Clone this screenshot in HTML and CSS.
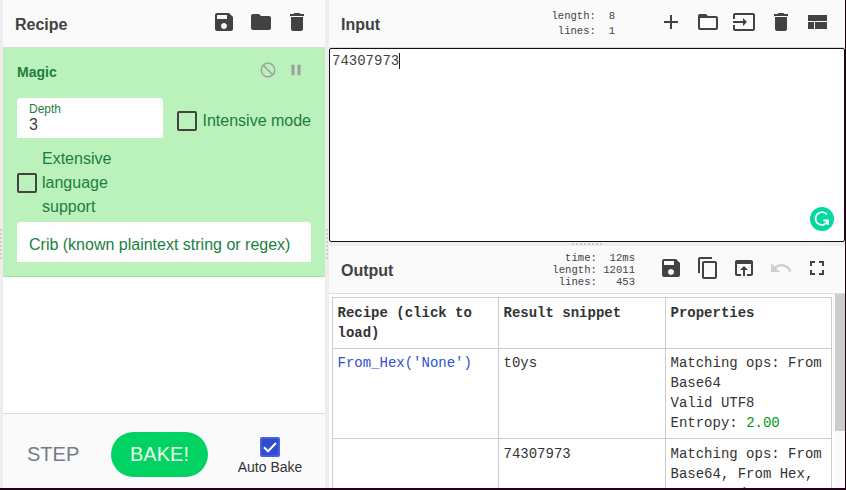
FILE: index.html
```
<!DOCTYPE html>
<html lang="en">
<head>
<meta charset="utf-8">
<title>CyberChef</title>
<link rel="stylesheet" href="styles.css">
</head>
<body>
<div class="workspace">
  <div class="gutter gutter-left"><i class="grip"></i></div>
  <section class="recipe">
    <header class="title-bar recipe-bar">
      <h2>Recipe</h2>
      <div class="icons">
        <svg viewBox="0 0 24 24"><path d="M17 3H5a2 2 0 0 0-2 2v14c0 1.100.9 2 2 2h14c1.100 0 2-.9 2-2V7l-4-4zm-5 16c-1.660 0-3-1.340-3-3s1.340-3 3-3 3 1.340 3 3-1.340 3-3 3zm3-10H5V5h10v4z"/></svg>
        <svg viewBox="0 0 24 24"><path d="M10 4H4c-1.100 0-1.990.9-1.990 2L2 18c0 1.100.9 2 2 2h16c1.100 0 2-.9 2-2V8c0-1.100-.9-2-2-2h-8l-2-2z"/></svg>
        <svg viewBox="0 0 24 24"><path d="M6 19c0 1.100.9 2 2 2h8c1.100 0 2-.9 2-2V7H6v12zM19 4h-3.500l-1-1h-5l-1 1H5v2h14V4z"/></svg>
      </div>
    </header>
    <div class="operation">
      <div class="op-head">
        <h3>Magic</h3>
        <div class="op-icons">
          <svg viewBox="0 0 24 24"><path d="M12 2a10 10 0 1 0 0 20 10 10 0 0 0 0-20zm0 18a8 8 0 0 1-6.310-12.900L16.900 18.310A7.900 7.900 0 0 1 12 20zm6.310-3.100L7.100 5.690A8 8 0 0 1 18.310 16.900z"/></svg>
          <svg viewBox="0 0 24 24"><path d="M6 19h4V5H6v14zm8-14v14h4V5h-4z"/></svg>
        </div>
      </div>
      <div class="args">
        <div class="field depth"><label>Depth</label><span>3</span></div>
        <div class="check intensive"><i class="box"></i><span>Intensive mode</span></div>
      </div>
      <div class="check extensive"><i class="box"></i><span>Extensive language support</span></div>
      <div class="field crib">Crib (known plaintext string or regex)</div>
    </div>
    <footer class="controls">
      <div class="step">STEP</div>
      <div class="bake">BAKE!</div>
      <div class="auto">
        <svg viewBox="0 0 20 20"><rect width="20" height="20" rx="2" fill="#3f68d8"/><rect x="1.500" y="1.500" width="17" height="17" fill="#3449cf" stroke="#4a67da" stroke-width=".6"/><path d="M4 10.300L8 14.300L16 6" fill="none" stroke="#fff" stroke-width="2"/></svg>
        <span>Auto Bake</span>
      </div>
    </footer>
  </section>
  <div class="gutter gutter-mid"><i class="grip"></i></div>
  <section class="io">
    <header class="title-bar">
      <h2>Input</h2>
      <pre class="stats in-stats">length:  8
 lines:  1</pre>
      <div class="icons">
        <svg viewBox="0 0 24 24"><path d="M19 13h-6v6h-2v-6H5v-2h6V5h2v6h6v2z"/></svg>
        <svg viewBox="0 0 24 24"><path d="M20 6h-8l-2-2H4c-1.100 0-1.990.9-1.990 2L2 18c0 1.100.9 2 2 2h16c1.100 0 2-.9 2-2V8c0-1.100-.9-2-2-2zm0 12H4V8h16v10z"/></svg>
        <svg viewBox="0 0 24 24"><path d="M21 3H3c-1.100 0-2 .9-2 2v4h2V5h18v14H3v-4H1v4c0 1.100.9 2 2 2h18c1.100 0 2-.9 2-2V5c0-1.100-.9-2-2-2zM11 16l4-4-4-4v3H1v2h10v3z"/></svg>
        <svg viewBox="0 0 24 24"><path d="M6 19c0 1.100.9 2 2 2h8c1.100 0 2-.9 2-2V7H6v12zM19 4h-3.500l-1-1h-5l-1 1H5v2h14V4z"/></svg>
        <svg viewBox="0 0 24 24"><path d="M3 19h6v-7H3v7zm7 0h12v-7H10v7zM3 5v6h19V5H3z"/></svg>
      </div>
    </header>
    <div class="input-text">
      <span class="typed">74307973</span>
      <svg class="badge" viewBox="0 0 24 24"><circle cx="12" cy="12" r="12" fill="#00d9a0"/><path d="M17 7.600A6.400 6.400 0 1 0 18 13.500H13.300M18 13v5" fill="none" stroke="#fff" stroke-width="1.800"/></svg>
    </div>
    <div class="gutter-h"><i class="grip-h"></i></div>
    <header class="title-bar output-bar">
      <h2>Output</h2>
      <pre class="stats out-stats">  time:  12ms
length: 12011
 lines:   453</pre>
      <div class="icons">
        <svg viewBox="0 0 24 24"><path d="M17 3H5a2 2 0 0 0-2 2v14c0 1.100.9 2 2 2h14c1.100 0 2-.9 2-2V7l-4-4zm-5 16c-1.660 0-3-1.340-3-3s1.340-3 3-3 3 1.340 3 3-1.340 3-3 3zm3-10H5V5h10v4z"/></svg>
        <svg viewBox="0 0 24 24"><path d="M16 1H4c-1.100 0-2 .9-2 2v14h2V3h12V1zm3 4H8c-1.100 0-2 .9-2 2v14c0 1.100.9 2 2 2h11c1.100 0 2-.9 2-2V7c0-1.100-.9-2-2-2zm0 16H8V7h11v14z"/></svg>
        <svg viewBox="0 0 24 24"><path d="M19 4H5c-1.110 0-2 .9-2 2v12c0 1.100.89 2 2 2h4v-2H5V8h14v10h-4v2h4c1.100 0 2-.9 2-2V6c0-1.100-.89-2-2-2zm-7 6l-4 4h3v6h2v-6h3l-4-4z"/></svg>
        <svg class="disabled" viewBox="0 0 24 24"><path d="M12.500 8c-2.650 0-5.050.99-6.900 2.600L2 7v9h9l-3.620-3.620c1.390-1.160 3.160-1.880 5.120-1.880 3.540 0 6.550 2.310 7.600 5.500l2.370-.78C21.080 11.030 17.150 8 12.500 8z"/></svg>
        <svg viewBox="0 0 24 24"><path d="M7 14H5v5h5v-2H7v-3zm-2-4h2V7h3V5H5v5zm12 7h-3v2h5v-5h-2v3zM14 5v2h3v3h2V5h-5z"/></svg>
      </div>
    </header>
    <div class="output">
      <table>
        <tr><th class="c1">Recipe (click to load)</th><th class="c2">Result snippet</th><th>Properties</th></tr>
        <tr><td><a>From_Hex('None')</a></td><td>t0ys</td><td>Matching ops: From Base64<br>Valid UTF8<br>Entropy: <b>2.00</b></td></tr>
        <tr class="last"><td></td><td>74307973</td><td>Matching ops: From Base64, From Hex, From Hexdump</td></tr>
      </table>
      <div class="scroll"><i></i></div>
    </div>
  </section>
</div>
</body>
</html>
```
FILE: styles.css
```
* { box-sizing: border-box; }
body {
  margin: 0;
  width: 846px;
  height: 490px;
  overflow: hidden;
  background: #240018;
  color: #424242;
  font-family: "Liberation Sans", Arial, sans-serif;
}
.workspace {
  display: grid;
  grid-template-columns: 3px 322px 4px 516px;
  width: 845px;
  height: 488px;
  overflow: hidden;
}
.gutter { background: #eee; padding-top: 229px; }
.grip {
  display: block;
  width: 2px;
  height: 30px;
  background: repeating-linear-gradient(#ccc 0 2px, transparent 2px 4px);
}
.gutter-mid .grip { margin-left: 1px; }
.recipe, .io { display: flex; flex-direction: column; height: 488px; background: #fff; min-width: 0; }
.title-bar {
  flex: none;
  display: flex;
  align-items: flex-start;
  height: 48px;
  padding: 10px 16px 0 12px;
  background: #fafafa;
  border-bottom: 1px solid #ddd;
}
h2 { flex: 1; margin: 5px 0 0; font-size: 16px; line-height: 20px; }
.icons { display: flex; gap: 12.500px; }
.recipe-bar .icons { gap: 12.300px; }
.icons svg { width: 24px; height: 24px; fill: #424242; }
.icons .disabled { fill: #d0d0d0; }
.stats {
  margin: 0;
  font: 10.600px/15px "Liberation Mono", monospace;
  color: #444;
}
.in-stats { margin: -1px 44px 0 0; }
.out-stats { margin: -4px 24px 0 0; line-height: 12px; }

.operation {
  height: 229px;
  padding: 14px 14px 0;
  background: #bbf1bb;
  border-bottom: 1px solid #9be89b;
  color: #1b7e3f;
}
.op-head { display: flex; justify-content: space-between; height: 36px; }
h3 { margin: 0; font-size: 14px; line-height: 20px; }
.op-icons { display: flex; gap: 10px; padding-right: 6px; }
.op-icons svg { width: 18px; height: 18px; margin-top: -1px; fill: #9e9e9e; }
.args { display: flex; gap: 14px; }
.field { background: #fff; height: 40px; border-radius: 4px 4px 0 0; padding: 0 12px; }
.depth { width: 146px; padding-top: 4px; }
.depth label { display: block; font-size: 12px; line-height: 14px; }
.depth span { display: block; font-size: 16px; line-height: 17px; color: #424242; }
.check { display: flex; align-items: center; gap: 5px; font-size: 16px; line-height: 24px; }
.intensive { height: 46px; gap: 5.500px; white-space: nowrap; }
.box { flex: none; width: 20px; height: 20px; border: 2px solid #424242; border-radius: 2px; }
.extensive { height: 72px; margin-top: 3px; width: 120px; }
.crib { margin-top: 3px; font-size: 16px; line-height: 45px; white-space: nowrap; }

.controls {
  display: flex;
  align-items: center;
  margin-top: auto;
  height: 75px;
  padding: 7px 0 0 24px;
  background: #fafafa;
  border-top: 1px solid #ddd;
  font-size: 20px;
}
.controls > div { flex: none; }
.step { width: 84px; color: #757c84; }
.bake {
  width: 97px;
  height: 45px;
  border-radius: 23px;
  background: #00d362;
  color: #e6fbe9;
  line-height: 45px;
  text-align: center;
}
.auto { width: 124px; display: flex; flex-direction: column; align-items: center; padding-top: 4px; font-size: 14px; line-height: 18px; color: #333; }
.auto svg { width: 20px; height: 20px; margin-bottom: 1px; }

.input-text {
  position: relative;
  flex: none;
  height: 194px;
  padding: 4px 2px;
  border: 1px solid #111;
  border-radius: 2px;
  background: #fff;
  font: 14px/16px "Liberation Mono", monospace;
}
.typed { display: inline-block; border-right: 1px solid #222; }
.badge { position: absolute; right: 10px; bottom: 10px; width: 24px; height: 24px; }
.gutter-h { flex: none; height: 4px; background: #eee; padding: 1px 0 0 243px; }
.grip-h {
  display: block;
  width: 30px;
  height: 2px;
  background: repeating-linear-gradient(90deg, #ccc 0 2px, transparent 2px 4px);
}
.output {
  flex: 1;
  min-height: 0;
  overflow: hidden;
  display: flex;
  justify-content: space-between;
  padding-left: 3px;
}
table {
  width: 500px;
  height: 0;
  margin-top: 3px;
  table-layout: fixed;
  border-collapse: collapse;
  font: 14px/20px "Liberation Mono", monospace;
  color: #333;
}
th, td { border: 1px solid #ccc; padding: 5px 4.500px; text-align: left; vertical-align: top; }
td { padding-top: 4px; }
.last td { padding-top: 5px; }
.c1 { width: 166px; }
.c2 { width: 167px; }
td a { color: #2f50d0; }
td b { color: #009a1a; font-weight: normal; }
.scroll { width: 10px; background: #fafafa; }
.scroll i { display: block; height: 137px; background: #ccc; }
```
